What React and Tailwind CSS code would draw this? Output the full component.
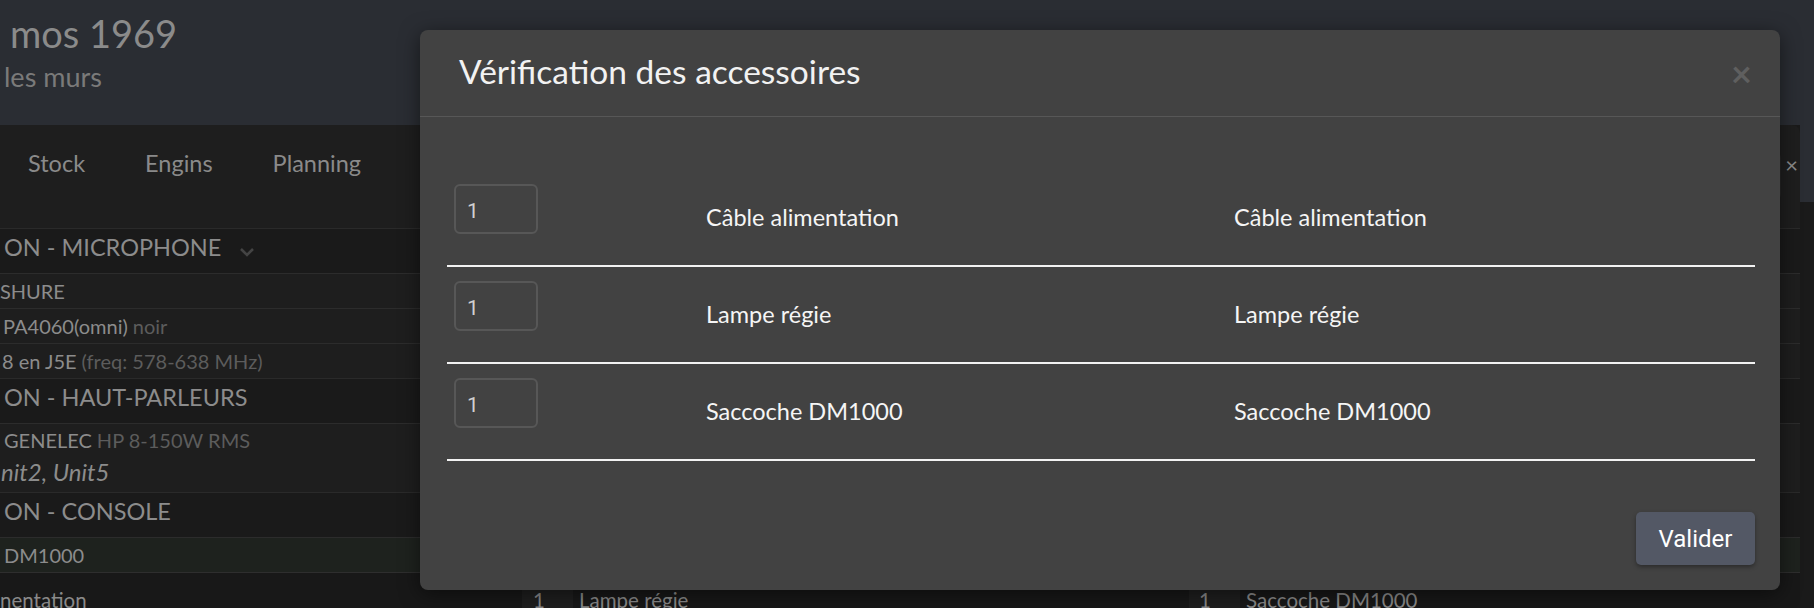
import React from 'react';

const accessories = ["Câble alimentation", "Lampe régie", "Saccoche DM1000"];

const SectionHeader = ({ label, chevron }) => (
  <div className="h-[45px] bg-[#1a1a1a] border-t border-[#2a2a2a] flex items-start pt-[3px] pl-[4px]">
    <span className="text-[23.5px] leading-[30px] text-[#8c8c8c] uppercase">{label}</span>
    {chevron && (
      <svg className="ml-[18px] mt-[15px]" width="16" height="10" viewBox="0 0 16 10" fill="none">
        <path d="M2 2l6 6 6-6" stroke="#444" strokeWidth="2.5" />
      </svg>
    )}
  </div>
);

const ListRow = ({ main, sub, className = "" }) => (
  <div className={`h-[35px] border-t border-[#2c2c2c] flex items-center text-[20px] ${className}`}>
    <span className="text-[#8c8c8c]">{main}</span>
    {sub && <span className="text-[#5c5c5c] ml-[5px]">{sub}</span>}
  </div>
);

const CheckModal = () => (
  <div className="absolute left-[420px] top-[30px] w-[1360px] bg-[#424242] rounded-[8px] shadow-[0_4px_20px_rgba(0,0,0,0.5)]">
    {/* Header */}
    <div className="h-[87px] border-b border-[#575757] flex items-center justify-between pl-[39px] pr-[28px]">
      <h3 className="text-[33.5px] text-[#f2f2f2] leading-none -mt-[3px]">Vérification des accessoires</h3>
      <span className="text-[36px] font-bold text-[#5f5f5f] leading-none">×</span>
    </div>

    {/* Body */}
    <div className="ml-[27px] mr-[25px] pt-[53px]">
      {accessories.map((name) => (
        <div key={name} className="h-[97px] border-b-2 border-[#f2f2f2] grid grid-cols-[252px_528px_1fr] items-start">
          <div className="pl-[7px] pt-[14px]">
            <div className="w-[84px] h-[50px] border-2 border-[#575757] rounded-[6px] flex items-center pl-[11px] pt-[5px] font-['Roboto',sans-serif] text-[21px] text-[#d0d0d0]">
              1
            </div>
          </div>
          <div className="pl-[7px] pt-[32px] text-[23.5px] leading-[30px] text-[#f5f5f5]">{name}</div>
          <div className="pl-[7px] pt-[32px] text-[23.5px] leading-[30px] text-[#f5f5f5]">{name}</div>
        </div>
      ))}
    </div>

    {/* Footer */}
    <div className="flex justify-end pt-[51px] pb-[25px] pr-[25px]">
      <button className="w-[119px] h-[53px] rounded-[5px] bg-[#535865] text-white text-[24px] font-['Roboto',sans-serif] shadow-[0_2px_4px_rgba(0,0,0,0.35)]">
        Valider
      </button>
    </div>
  </div>
);

export default function App() {
  return (
    <div className="relative w-[1814px] h-[608px] overflow-hidden bg-[#1a1a1a] font-['Lato','Liberation_Sans',sans-serif]">
      {/* Top header band */}
      <div className="h-[125px] bg-[#2a2d33] pl-[10px] pt-[14px]">
        <div className="text-[38px] leading-[38px] text-[#8b8b8b]">mos 1969</div>
        <div className="text-[27px] leading-[26px] text-[#7a7a7a] mt-[12px] -ml-[6px]">les murs</div>
      </div>

      <div className="flex">
        {/* Back panel */}
        <div className="w-[1800px] bg-[#1e1e1e] rounded-tr-[8px]">
          <div className="h-[103px] flex items-start">
            <nav className="flex gap-[60px] pl-[28px] pt-[23px] text-[23.5px] leading-[30px] text-[#8a8a8a]">
              <span>Stock</span>
              <span>Engins</span>
              <span>Planning</span>
            </nav>
            <div className="ml-auto flex items-start pt-[27px] pr-[2px]">
              <div className="w-[220px] h-[48px] rounded-[6px] bg-[#262626]" />
              <span className="ml-[4px] mt-[-2px] text-[22px] text-[#8a8a8a] leading-[30px]">×</span>
            </div>
          </div>

          <SectionHeader label="ON - MICROPHONE" chevron />
          <ListRow main="SHURE" />
          <ListRow main="PA4060(omni)" sub="noir" className="pl-[3px]" />
          <ListRow main="8 en J5E" sub="(freq: 578-638 MHz)" className="pl-[2px]" />
          <SectionHeader label="ON - HAUT-PARLEURS" />
          <div className="h-[69px] border-t border-[#2c2c2c] pt-[3px] pl-[4px]">
            <div className="text-[20px] leading-[26px]">
              <span className="text-[#8c8c8c]">GENELEC</span>
              <span className="text-[#5c5c5c] ml-[5px]">HP 8-150W RMS</span>
            </div>
            <div className="italic text-[24px] leading-[30px] text-[#8c8c8c] mt-[4px] -ml-[3px]">nit2, Unit5</div>
          </div>
          <SectionHeader label="ON - CONSOLE" />
          <ListRow main="DM1000" className="bg-[#1e221e] pl-[4px]" />
          <div className="h-[40px] border-t border-[#2e2e2e] bg-[#181818] flex items-start text-[20.5px] leading-[28px] text-[#8a8a8a] pt-[13px]">
            <span className="w-[522px]">nentation</span>
            <span className="w-[51px] h-[30px] bg-[#1f1f1f] pl-[11px]">1</span>
            <span className="ml-[6px] w-[610px]">Lampe régie</span>
            <span className="w-[51px] h-[30px] bg-[#1f1f1f] pl-[10px]">1</span>
            <span className="ml-[6px]">Saccoche DM1000</span>
          </div>
        </div>

        {/* Right strip */}
        <div className="flex-1">
          <div className="h-[77px] bg-[#2a2d33]" />
        </div>
      </div>

      <CheckModal />
    </div>
  );
}
